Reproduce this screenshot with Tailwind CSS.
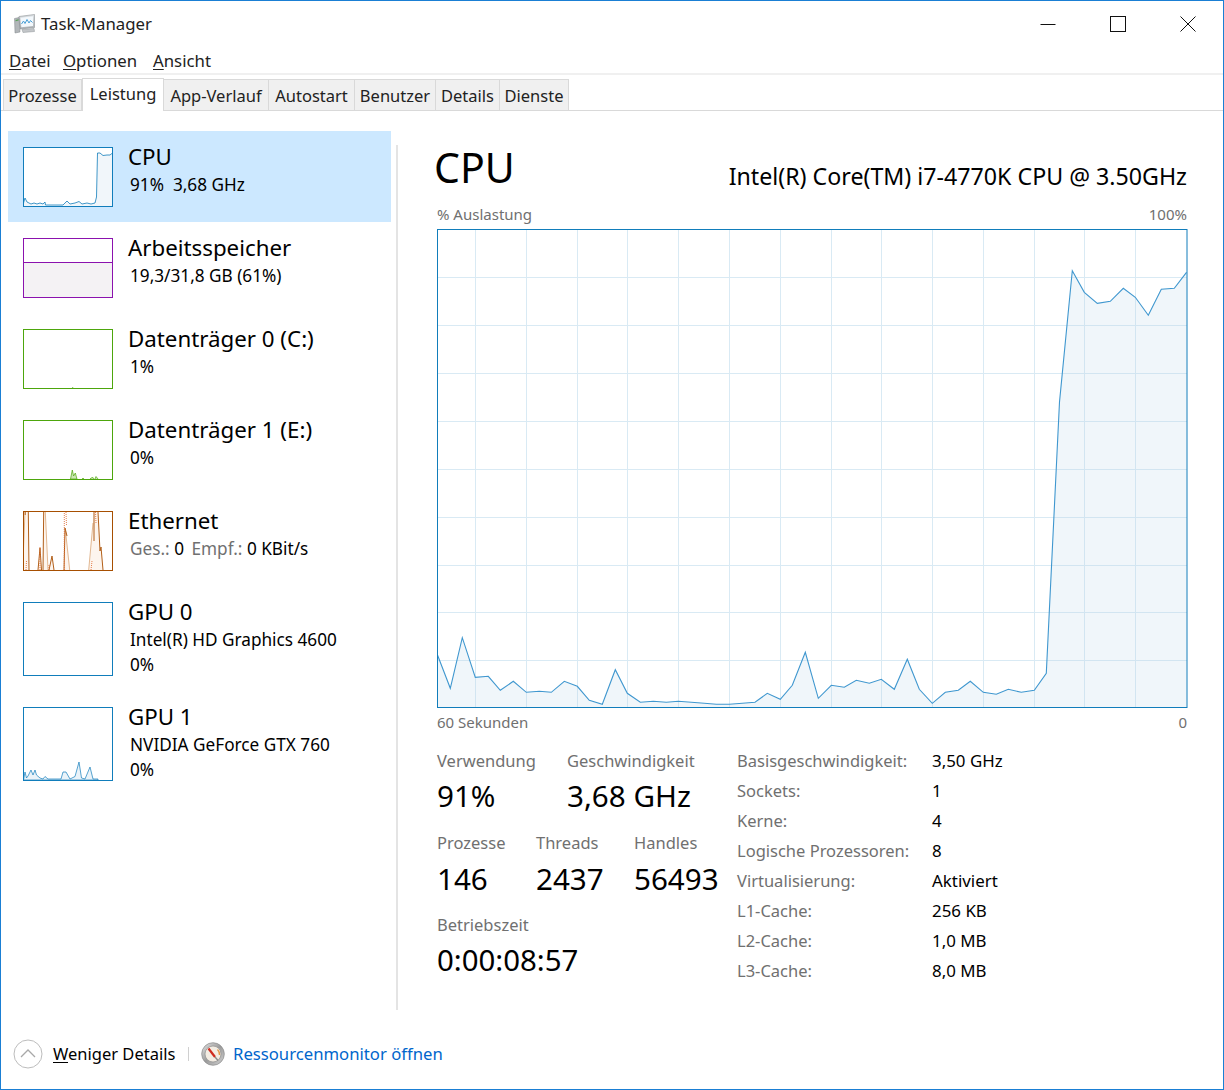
<!DOCTYPE html>
<html lang="de">
<head>
<meta charset="utf-8">
<title>Task-Manager</title>
<script src="https://cdn.jsdelivr.net/npm/@tailwindcss/browser@4"></script>
</head>
<body class="bg-white">
<div class="w-[1224px] h-[1090px] border border-[#1a7fd4] bg-white flex flex-col overflow-hidden font-['Noto_Sans',sans-serif] text-black">

  <!-- title bar -->
  <div class="h-[46px] shrink-0 flex items-center">
    <svg class="ml-[13px] w-[21px] h-[20px]" viewBox="0 0 21 20">
      <defs>
        <linearGradient id="bezel" x1="0" y1="0" x2="0" y2="1"><stop offset="0" stop-color="#dfe3e6"/><stop offset="1" stop-color="#a9aeb2"/></linearGradient>
        <linearGradient id="rim" x1="0" y1="0" x2="1" y2="1"><stop offset="0" stop-color="#e4e4e4"/><stop offset=".5" stop-color="#9b9b9b"/><stop offset="1" stop-color="#d4d4d4"/></linearGradient>
      </defs>
      <path d="M5 2.5 L20.5 .5 L20.5 13.5 L6 15 Z" fill="url(#bezel)" stroke="#8d9296" stroke-width=".6"/>
      <path d="M6.5 3.8 L19 2.2 L19 12 L7.3 13.2 Z" fill="#f3f8fc"/>
      <path d="M7.5 10 L9.5 7 L11 9.5 L13 5.5 L15 9 L16.5 6.5 L18.5 8.5" fill="none" stroke="#4aa0d6" stroke-width="1"/>
      <path d="M.5 4.5 L5 3.5 L6 18 L1 19 Z" fill="#b2b6b9" stroke="#7f8488" stroke-width=".5"/>
      <path d="M1.5 6 L4.5 5.3 L4.6 6.5 L1.6 7.2 Z" fill="#5ba05a"/>
      <path d="M8 15.5 L20 14.5 L20.5 17.5 L9 18.5 Z" fill="#c3c6c9" stroke="#8d9296" stroke-width=".5"/>
    </svg>
    <span class="ml-[6px] text-[16.8px] leading-[22px] text-[#222]">Task-Manager</span>
    <div class="ml-auto flex items-center">
      <svg class="w-[16px] h-[16px] mr-[54px]" viewBox="0 0 16 16"><path d="M0.5 8.5H15.5" stroke="#111" stroke-width="1"/></svg>
      <svg class="w-[16px] h-[16px] mr-[54px]" viewBox="0 0 16 16"><rect x="0.5" y="0.5" width="15" height="15" fill="none" stroke="#111" stroke-width="1"/></svg>
      <svg class="w-[16px] h-[16px] mr-[27px]" viewBox="0 0 16 16"><path d="M.5 .5L15.5 15.5M15.5 .5L.5 15.5" stroke="#111" stroke-width="1"/></svg>
    </div>
  </div>

  <!-- menu -->
  <div class="h-[26px] shrink-0 flex items-center pt-[2px] text-[16.8px] leading-[22px] text-[#222]">
    <span class="ml-[8px] w-[54px]"><span class="underline underline-offset-2">D</span>atei</span>
    <span class="w-[90px]"><span class="underline underline-offset-2">O</span>ptionen</span>
    <span><span class="underline underline-offset-2">A</span>nsicht</span>
  </div>
  <div class="h-[2px] shrink-0 bg-[#f0f0f0]"></div>

  <!-- tabs -->
  <div class="h-[36px] shrink-0 flex items-end pl-[2px] border-b border-[#d9d9d9] text-[16.5px] leading-[22px] text-[#222]">
    <div class="w-[79px] h-[31px] pt-[2px] bg-[#f0f0f0] border border-[#d9d9d9] border-b-0 flex items-center justify-center whitespace-nowrap">Prozesse</div>
    <div class="w-[82px] h-[33px] -mb-[1px] bg-white border border-[#d9d9d9] border-b-0 flex items-center justify-center pb-[2px] whitespace-nowrap">Leistung</div>
    <div class="w-[105px] h-[31px] pt-[2px] bg-[#f0f0f0] border-r border-t border-[#d9d9d9] flex items-center justify-center whitespace-nowrap">App-Verlauf</div>
    <div class="w-[86px] h-[31px] pt-[2px] bg-[#f0f0f0] border-r border-t border-[#d9d9d9] flex items-center justify-center whitespace-nowrap">Autostart</div>
    <div class="w-[81px] h-[31px] pt-[2px] bg-[#f0f0f0] border-r border-t border-[#d9d9d9] flex items-center justify-center whitespace-nowrap">Benutzer</div>
    <div class="w-[64px] h-[31px] pt-[2px] bg-[#f0f0f0] border-r border-t border-[#d9d9d9] flex items-center justify-center whitespace-nowrap">Details</div>
    <div class="w-[69px] h-[31px] pt-[2px] bg-[#f0f0f0] border-r border-t border-[#d9d9d9] flex items-center justify-center whitespace-nowrap">Dienste</div>
  </div>

  <!-- body -->
  <div class="h-[914px] shrink-0 flex">
    <!-- sidebar -->
    <div class="w-[390px] shrink-0 pt-[20px] pl-[7px]">
      <div class="w-[383px] h-[91px] bg-[#cce8ff] flex pl-[15px] pt-[16px]">
        <svg class="w-[90px] h-[60px] shrink-0" viewBox="0 0 90 60">
          <rect width="90" height="60" fill="#fff"/>
          <path d="M.5 59.5L.5 56L2 51L4 55L8 57L11 56L14 57L17 56L20 57L22 55L22.5 58L40 58L44 54L47 57L52 56L56 54.5L59 57L64 56L68 57L72 56L73.5 50L74.5 6L77 6L80 8.5L84 8L87 8L89.5 6L89.5 59.5Z" fill="#f1f6fa"/>
          <path d="M.5 56L2 51L4 55L8 57L11 56L14 57L17 56L20 57L22 55L22.5 58L40 58L44 54L47 57L52 56L56 54.5L59 57L64 56L68 57L72 56L73.5 50L74.5 6L77 6L80 8.5L84 8L87 8L89.5 6" fill="none" stroke="#117dbb" stroke-width=".8"/>
          <rect x=".5" y=".5" width="89" height="59" fill="none" stroke="#117dbb"/>
        </svg>
        <div class="ml-[15px] -mt-[4px]">
          <div class="text-[22.3px] leading-[28px]">CPU</div>
          <div class="mt-[1px] text-[17.2px] leading-[26px] pl-[2px] whitespace-pre">91%  3,68 GHz</div>
        </div>
      </div>

      <div class="w-[383px] h-[91px] flex pl-[15px] pt-[16px]">
        <svg class="w-[90px] h-[60px] shrink-0" viewBox="0 0 90 60">
          <rect width="90" height="60" fill="#fff"/>
          <rect x=".5" y="24" width="89" height="35.5" fill="#f4f2f4"/>
          <path d="M0 24.5H90" stroke="#8b12ae"/>
          <rect x=".5" y=".5" width="89" height="59" fill="none" stroke="#8b12ae"/>
        </svg>
        <div class="ml-[15px] -mt-[4px]">
          <div class="text-[22.3px] leading-[28px]">Arbeitsspeicher</div>
          <div class="mt-[1px] text-[17.2px] leading-[26px] pl-[2px]">19,3/31,8 GB (61%)</div>
        </div>
      </div>

      <div class="w-[383px] h-[91px] flex pl-[15px] pt-[16px]">
        <svg class="w-[90px] h-[60px] shrink-0" viewBox="0 0 90 60">
          <rect width="90" height="60" fill="#fff"/>
          <path d="M49 59L49.7 58L50.5 59Z" fill="#4da60c"/>
          <rect x=".5" y=".5" width="89" height="59" fill="none" stroke="#4da60c"/>
        </svg>
        <div class="ml-[15px] -mt-[4px]">
          <div class="text-[22.3px] leading-[28px]">Datenträger 0 (C:)</div>
          <div class="mt-[1px] text-[17.2px] leading-[26px] pl-[2px]">1%</div>
        </div>
      </div>

      <div class="w-[383px] h-[91px] flex pl-[15px] pt-[16px]">
        <svg class="w-[90px] h-[60px] shrink-0" viewBox="0 0 90 60">
          <rect width="90" height="60" fill="#fff"/>
          <path d="M47.5 59L49.3 50L50.6 56L52.3 53L54 59Z" fill="#cbe5b5" stroke="#4da60c" stroke-width=".7"/>
          <path d="M59 59L60 58L61 59M67 59L68 58L70 57.5L71 59M72 59L73 56.5L75 59" fill="#cbe5b5" stroke="#4da60c" stroke-width=".7"/>
          <rect x=".5" y=".5" width="89" height="59" fill="none" stroke="#4da60c"/>
        </svg>
        <div class="ml-[15px] -mt-[4px]">
          <div class="text-[22.3px] leading-[28px]">Datenträger 1 (E:)</div>
          <div class="mt-[1px] text-[17.2px] leading-[26px] pl-[2px]">0%</div>
        </div>
      </div>

      <div class="w-[383px] h-[91px] flex pl-[15px] pt-[16px]">
        <svg class="w-[90px] h-[60px] shrink-0" viewBox="0 0 90 60">
          <rect width="90" height="60" fill="#fff"/>
          <path d="M0 59L0 50L2 1L5.3 1L6 59ZM15 59L17 37L18.5 59ZM20 59L20.7 1L22.3 1L25 59ZM26 59L29 45L31 59ZM41 59L42.3 17L46.7 59ZM65.7 59L71 1L75 1L77 40L79 42L80 59Z" fill="#fdf5ee"/>
          <path d="M0 50L2 1M22.3 1L25 59M42.5 20L46.7 59M65.7 59L70 12" fill="none" stroke="#e2b892" stroke-width="1"/>
          <path d="M2.2 1L2.2 4M5.3 1L6 59M15 59L17 37L18.5 59M20 59L20.7 1M26 59L29 45L31 59M41 59L42 17L44 25M71 1L71 30M75 1L77 40L78 36L80 59" fill="none" stroke="#b25f19" stroke-width="1"/>
          <path d="M3 59L3.5 50M17 59L17 36M26 59L26 54M41.3 59L41.3 1M43 1L43.5 15M68 59L69 50M72.5 1L73 12" fill="none" stroke="#e0703a" stroke-width=".9" stroke-dasharray="1 1"/>
          <rect x=".5" y=".5" width="89" height="59" fill="none" stroke="#a74f01"/>
        </svg>
        <div class="ml-[15px] -mt-[4px]">
          <div class="text-[22.3px] leading-[28px]">Ethernet</div>
          <div class="mt-[1px] text-[17.2px] leading-[26px] pl-[2px] whitespace-pre"><span class="text-[#707070]">Ges.:</span> 0 <span class="ml-[3px] text-[#707070]">Empf.:</span> 0 KBit/s</div>
        </div>
      </div>

      <div class="w-[383px] h-[105px] flex pl-[15px] pt-[16px]">
        <svg class="w-[90px] h-[74px] shrink-0" viewBox="0 0 90 74">
          <rect width="90" height="74" fill="#fff"/>
          <rect x=".5" y=".5" width="89" height="73" fill="none" stroke="#117dbb"/>
        </svg>
        <div class="ml-[15px] -mt-[4px]">
          <div class="text-[22.3px] leading-[28px]">GPU 0</div>
          <div class="mt-[1px] text-[17.2px] leading-[26px] pl-[2px]">Intel(R) HD Graphics 4600</div>
          <div class="text-[17.2px] leading-[24px] pl-[2px]">0%</div>
        </div>
      </div>

      <div class="w-[383px] h-[105px] flex pl-[15px] pt-[16px]">
        <svg class="w-[90px] h-[74px] shrink-0" viewBox="0 0 90 74">
          <rect width="90" height="74" fill="#fff"/>
          <path d="M.5 73L2 65L3.5 71L5 69L8 63L10 68L12 63L13.5 68L17 71L20 72L22 69.5L25 72L30 72L38 72L40 65L43 65L47 72L52 69.5L56 55L58.5 71L62 72L67 60L70 72L75 72L75 73Z" fill="#eaf3f9" stroke="#117dbb" stroke-width=".7"/>
          <rect x=".5" y=".5" width="89" height="73" fill="none" stroke="#117dbb"/>
        </svg>
        <div class="ml-[15px] -mt-[4px]">
          <div class="text-[22.3px] leading-[28px]">GPU 1</div>
          <div class="mt-[1px] text-[17.2px] leading-[26px] pl-[2px]">NVIDIA GeForce GTX 760</div>
          <div class="text-[17.2px] leading-[24px] pl-[2px]">0%</div>
        </div>
      </div>
    </div>

    <!-- divider -->
    <div class="w-[2px] h-[865px] mt-[34px] ml-[5px] shrink-0 bg-[#e4e4e4]"></div>

    <!-- main -->
    <div class="ml-[39px] w-[751px] shrink-0">
      <div class="mt-[34px] h-[46px] flex justify-between">
        <div class="text-[41px] leading-[46px] -ml-[3px] -mt-[1px]">CPU</div>
        <div class="text-[23.2px] leading-[46px] pt-[8px] pr-[1px] whitespace-nowrap">Intel(R) Core(TM) i7-4770K CPU @ 3.50GHz</div>
      </div>
      <div class="mt-[13px] h-[20px] flex justify-between text-[15px] leading-[20px] text-[#707070]">
        <span>% Auslastung</span><span class="pr-[1px]">100%</span>
      </div>
      <svg class="mt-[5px] block w-[751px] h-[479px]" viewBox="437 229 751 479">
        <path d="M475.5 229V708M526.5 229V708M577.5 229V708M627.5 229V708M678.5 229V708M729.5 229V708M780.5 229V708M831.5 229V708M881.5 229V708M932.5 229V708M983.5 229V708M1034.5 229V708M1084.5 229V708M1135.5 229V708M437 277.5H1187M437 325.5H1187M437 373.5H1187M437 421.5H1187M437 469.5H1187M437 517.5H1187M437 565.5H1187M437 612.5H1187M437 660.5H1187" stroke="#d9eaf4" stroke-width="1" fill="none"/>
        <path d="M437.5 707L437.5 655L450.3 688.3L462.3 637.7L475.3 677.3L488.3 676.3L500.3 690.3L513.3 681.3L526.3 692.3L539.3 691.3L551.3 692.3L564.3 681.3L577.3 686.3L589.3 700.3L602.3 704.3L615.3 669.7L627.3 693.3L640.3 702.3L653.3 701.3L666.3 702.3L678.3 701.3L691.3 702.3L704.3 703.3L716.3 704.3L729.3 704.3L742.3 703.3L755 702.3L767.3 693.3L780.3 699.3L792.3 685.3L805.3 652.3L818.3 698.3L831.3 685.3L844.3 687.3L856.3 680.3L869.3 683.3L881.3 679.3L894.3 689.3L907.3 659.3L919.3 689.3L932.3 703.3L945.3 692.3L958.3 690.3L970.3 681.3L983.3 692.3L996.3 694.3L1008.3 689.3L1021.3 692.3L1034.3 690.3L1046.3 673.3L1059.5 402L1072.3 270.7L1084.3 292.3L1097.3 303.3L1110.3 301.3L1123.3 288.3L1135.3 297.3L1148.3 315.3L1161.3 289.3L1174.3 288.3L1186.5 272.3L1186.5 707Z" fill="#bcd6e8" fill-opacity=".22"/>
        <path d="M437.5 655L450.3 688.3L462.3 637.7L475.3 677.3L488.3 676.3L500.3 690.3L513.3 681.3L526.3 692.3L539.3 691.3L551.3 692.3L564.3 681.3L577.3 686.3L589.3 700.3L602.3 704.3L615.3 669.7L627.3 693.3L640.3 702.3L653.3 701.3L666.3 702.3L678.3 701.3L691.3 702.3L704.3 703.3L716.3 704.3L729.3 704.3L742.3 703.3L755 702.3L767.3 693.3L780.3 699.3L792.3 685.3L805.3 652.3L818.3 698.3L831.3 685.3L844.3 687.3L856.3 680.3L869.3 683.3L881.3 679.3L894.3 689.3L907.3 659.3L919.3 689.3L932.3 703.3L945.3 692.3L958.3 690.3L970.3 681.3L983.3 692.3L996.3 694.3L1008.3 689.3L1021.3 692.3L1034.3 690.3L1046.3 673.3L1059.5 402L1072.3 270.7L1084.3 292.3L1097.3 303.3L1110.3 301.3L1123.3 288.3L1135.3 297.3L1148.3 315.3L1161.3 289.3L1174.3 288.3L1186.5 272.3" fill="none" stroke="#3f97cf" stroke-width="1.1"/>
        <rect x="437.5" y="229.5" width="749.5" height="478" fill="none" stroke="#117dbb"/>
      </svg>
      <div class="mt-[4px] h-[20px] flex justify-between text-[15px] leading-[20px] text-[#707070]">
        <span>60 Sekunden</span><span class="pr-[1px]">0</span>
      </div>

      <div class="mt-[14px] flex">
        <div class="w-[300px] shrink-0 pt-[5px]">
          <div class="flex">
            <div class="w-[130px]">
              <div class="text-[16.5px] leading-[20px] text-[#707070]">Verwendung</div>
              <div class="mt-[5px] text-[29.6px] leading-[40px]">91%</div>
            </div>
            <div>
              <div class="text-[16.5px] leading-[20px] text-[#707070] whitespace-nowrap">Geschwindigkeit</div>
              <div class="mt-[5px] text-[29.6px] leading-[40px]">3,68 GHz</div>
            </div>
          </div>
          <div class="mt-[17px] flex">
            <div class="w-[99px]">
              <div class="text-[16.5px] leading-[20px] text-[#707070]">Prozesse</div>
              <div class="mt-[6px] text-[29.6px] leading-[40px]">146</div>
            </div>
            <div class="w-[98px]">
              <div class="text-[16.5px] leading-[20px] text-[#707070]">Threads</div>
              <div class="mt-[6px] text-[29.6px] leading-[40px]">2437</div>
            </div>
            <div>
              <div class="text-[16.5px] leading-[20px] text-[#707070]">Handles</div>
              <div class="mt-[6px] text-[29.6px] leading-[40px]">56493</div>
            </div>
          </div>
          <div class="mt-[16px] text-[16.5px] leading-[20px] text-[#707070]">Betriebszeit</div>
          <div class="mt-[5px] text-[29.4px] leading-[40px]">0:00:08:57</div>
        </div>
        <div class="grid grid-cols-[195px_1fr] auto-rows-[30px] items-center text-[16.9px] whitespace-nowrap">
          <span class="text-[#707070] text-[16.5px]">Basisgeschwindigkeit:</span><span>3,50 GHz</span>
          <span class="text-[#707070] text-[16.5px]">Sockets:</span><span>1</span>
          <span class="text-[#707070] text-[16.5px]">Kerne:</span><span>4</span>
          <span class="text-[#707070] text-[16.5px]">Logische Prozessoren:</span><span>8</span>
          <span class="text-[#707070] text-[16.5px]">Virtualisierung:</span><span>Aktiviert</span>
          <span class="text-[#707070] text-[16.5px]">L1-Cache:</span><span>256 KB</span>
          <span class="text-[#707070] text-[16.5px]">L2-Cache:</span><span>1,0 MB</span>
          <span class="text-[#707070] text-[16.5px]">L3-Cache:</span><span>8,0 MB</span>
        </div>
      </div>
    </div>
  </div>

  <!-- footer -->
  <div class="flex-1 flex items-center pb-[7px]">
    <svg class="ml-[12px] w-[30px] h-[30px] shrink-0" viewBox="0 0 30 30">
      <circle cx="15" cy="15" r="14" fill="#fff" stroke="#bdbdbd" stroke-width="1"/>
      <path d="M8 18L15 11L22 18" fill="none" stroke="#a8a8a8" stroke-width="1.3"/>
    </svg>
    <span class="ml-[10px] w-[135px] text-[16.5px] leading-[22px] whitespace-nowrap"><span class="underline underline-offset-2">W</span>eniger Details</span>
    <div class="w-px h-[14px] bg-[#d0d0d0]"></div>
    <svg class="ml-[12px] w-[24px] h-[24px] shrink-0" viewBox="0 0 24 24">
      <circle cx="12" cy="12" r="11.3" fill="url(#rim)" stroke="#8a8a8a" stroke-width=".7"/>
      <circle cx="12" cy="12" r="8" fill="#f3ece2" stroke="#8f8f8f" stroke-width=".7"/>
      <path d="M7.5 6.5L14 15" stroke="#cf2a1e" stroke-width="2.2"/>
      <path d="M14 15L17 18.5" stroke="#8a8a8a" stroke-width="1.4"/>
      <path d="M16.5 7.5A7 7 0 0 1 18.5 13" fill="none" stroke="#e39a4a" stroke-width="1.4"/>
    </svg>
    <span class="ml-[8px] text-[16.7px] leading-[22px] text-[#0066cc] whitespace-nowrap">Ressourcenmonitor öffnen</span>
  </div>
</div>
</body>
</html>
